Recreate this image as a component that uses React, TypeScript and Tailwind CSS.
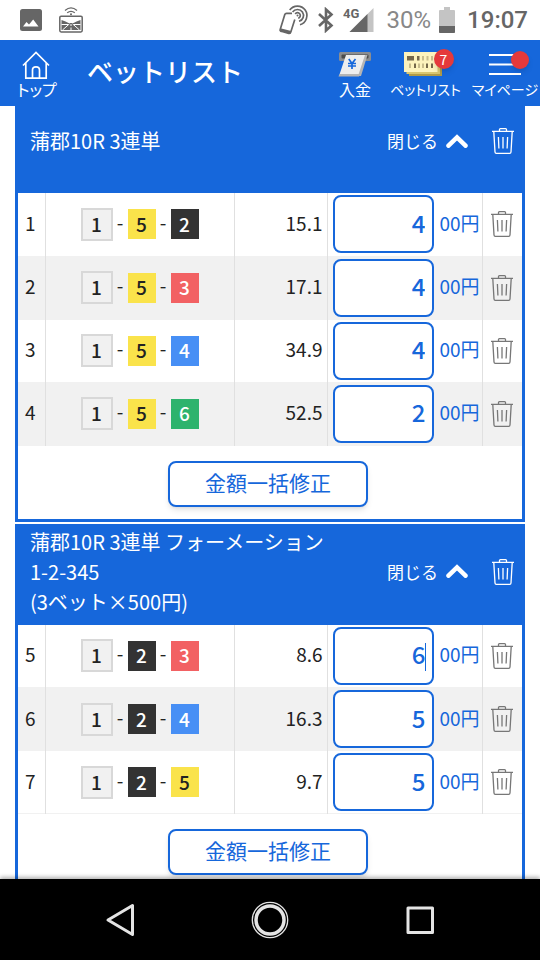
import { useState } from 'react';
import type { ReactNode } from 'react';

type Bet = {
  no: number;
  boats: number[];
  odds: string;
  amount: string;
  editing?: boolean;
};

type Group = {
  id: string;
  title: string[];
  headClass: string;
  bets: Bet[];
};

const groups: Group[] = [
  {
    id: 'normal',
    title: ['蒲郡10R 3連単'],
    headClass: 'pt-5 pb-[37px]',
    bets: [
      { no: 1, boats: [1, 5, 2], odds: '15.1', amount: '4' },
      { no: 2, boats: [1, 5, 3], odds: '17.1', amount: '4' },
      { no: 3, boats: [1, 5, 4], odds: '34.9', amount: '4' },
      { no: 4, boats: [1, 5, 6], odds: '52.5', amount: '2' },
    ],
  },
  {
    id: 'formation',
    title: ['蒲郡10R 3連単 フォーメーション', '1-2-345', '(3ベット×500円)'],
    headClass: 'pt-[3px] pb-2',
    bets: [
      { no: 5, boats: [1, 2, 3], odds: '8.6', amount: '6', editing: true },
      { no: 6, boats: [1, 2, 4], odds: '16.3', amount: '5' },
      { no: 7, boats: [1, 2, 5], odds: '9.7', amount: '5' },
    ],
  },
];

const boatStyles: Record<number, string> = {
  1: 'h-[33px] w-8 border-2 border-[#d8d8d8] bg-[#f1f1f1] text-[#222]',
  2: 'h-[30px] w-7 bg-[#333] text-white',
  3: 'h-[30px] w-7 bg-[#f26163] text-white',
  4: 'h-[30px] w-7 bg-[#478ff5] text-white',
  5: 'h-[30px] w-7 bg-[#fae34b] text-[#222]',
  6: 'h-[30px] w-7 bg-[#2db36d] text-white',
};

const TrashIcon = () => (
  <svg width="22" height="26" viewBox="0 0 22 26" fill="none" stroke="currentColor" strokeWidth="1.3">
    <path d="M0 3.3h22M7.5 3V1.6q0-.9.9-.9h5.2q.9 0 .9.9V3" />
    <path d="M1.8 3.6 3 24q.1 1.3 1.3 1.3h13.4q1.2 0 1.3-1.3l1.2-20.4" />
    <path d="M6.400 9l.5 11.500M11 9v11.500M15.600 9l-.5 11.500" />
  </svg>
);

const StatusBar = () => (
  <div className="flex h-10 shrink-0 items-center bg-white pr-3 pl-5 font-['Roboto',sans-serif] text-[#666]">
    <svg width="22" height="22" viewBox="0 0 22 22" aria-hidden="true">
      <rect width="22" height="22" rx="2.5" fill="#666" />
      <path d="M3 17.500 6.500 13l2.500 2.500L13.200 10.500l5.300 7z" fill="#fff" />
    </svg>
    <svg className="ml-[17px]" width="24" height="26" viewBox="0 0 24 26" fill="none" stroke="#666" aria-hidden="true">
      <path d="M6 3.400q6-5 12 0M8.200 5.800q3.800-3 7.600 0" strokeWidth="1.300" />
      <circle cx="12" cy="7.300" r="1" fill="#666" stroke="none" />
      <rect x=".8" y="9.300" width="22.400" height="15.600" rx="1.300" strokeWidth="1.500" />
      <path d="M2.500 13l4 1.500 3 1.500h5l3-1.500 4-1.500V23h-19z" fill="#666" stroke="none" />
      <path d="M10.500 16.800 3.500 23M13.500 16.800 20.500 23M2.500 17.500h6.500M21.500 17.500H15M12 17v2M12 20.500V23" stroke="#fff" strokeWidth="1" />
    </svg>
    <div className="ml-auto flex items-center">
      <svg width="30" height="30" viewBox="0 0 30 30" fill="none" stroke="#666" aria-hidden="true">
        <path d="M13 8.300H7.500q-1.300 0-1.700 1.200L1.200 24.500q-.4 1.500 1 1.800l7.600 2q1.500.3 2-1.200l4-12.500" strokeWidth="1.700" />
        <path d="M1.300 23.300l11 2.800-.8 2.600-10.700-2.700z" fill="#666" stroke="none" />
        <path d="M10.700 5A9.500 9.500 0 1 1 21 19.700M13.600 7A6 6 0 1 1 20 16.300M16.200 8.900A2.800 2.800 0 1 1 19.200 13.200" strokeWidth="1.700" />
        <circle cx="18.500" cy="10.500" r="1" fill="#666" stroke="none" />
      </svg>
      <svg className="ml-2" width="18" height="26" viewBox="0 0 18 26" fill="none" stroke="#666" strokeWidth="2.600" aria-hidden="true">
        <path d="M2 7l12.500 11.500-5.500 5V2.500l5.500 5L2 19" />
      </svg>
      <svg className="ml-2" width="32" height="26" viewBox="0 0 32 26" aria-hidden="true">
        <path d="M30.500 1v24H6.500z" fill="#c4c4c4" />
        <path d="M24.500 7v18h-18z" fill="#666" />
        <path d="M0 0h17v12H0z" fill="#fff" />
        <text x="0" y="11" fontSize="13" fontWeight="700" fill="#666">4G</text>
      </svg>
      <span className="ml-3 text-2xl text-[#888]">30%</span>
      <svg className="ml-2" width="16" height="26" viewBox="0 0 16 26" aria-hidden="true">
        <path d="M5 0h6v3h4q1 0 1 1v21q0 1-1 1H1q-1 0-1-1V4q0-1 1-1h4z" fill="#c4c4c4" />
        <path d="M0 19h16v6q0 1-1 1H1q-1 0-1-1z" fill="#666" />
      </svg>
      <span className="ml-3 text-2xl font-medium">19:07</span>
    </div>
  </div>
);

const HeaderLink = ({ label, className, children }: { label: string; className: string; children: ReactNode }) => (
  <a
    href="#"
    className={`flex flex-col items-center leading-[18px] whitespace-nowrap [font-feature-settings:'palt'] ${className}`}
  >
    <span className="relative flex h-8 items-center justify-center">{children}</span>
    {label}
  </a>
);

const Header = () => (
  <header className="flex h-[66px] shrink-0 bg-[#1667db] pt-2 text-white">
    <HeaderLink label="トップ" className="w-[74px] text-base">
      <svg className="mr-0.5" width="28" height="30" viewBox="0 0 28 30" fill="none" stroke="currentColor" strokeWidth="1.700" aria-hidden="true">
        <path d="M1 16.500 14 3.500l13 13M3.800 14v15.200h20.400V14" />
        <path d="M10.500 29V21q0-3.200 3.500-3.200t3.500 3.200v8" />
      </svg>
    </HeaderLink>
    <h1 className="ml-[13px] pt-[3px] text-[26px] leading-10 font-medium">ベットリスト</h1>
    <div className="ml-auto flex">
      <HeaderLink label="入金" className="w-[52px] text-base">
        <svg width="34" height="28" viewBox="0 0 34 28" aria-hidden="true">
          <rect x="1" y="2" width="32" height="9" rx="1.500" fill="#8b8d90" />
          <rect x="3.500" y="4.500" width="27" height="4" rx="1" fill="#4b4b4b" />
          <path d="M26 5h3.500l-6.500 21h-4z" fill="#b5b5b5" />
          <path d="M8 5h19l-6.500 19.500H1.500z" fill="#eee" />
          <path d="M1.500 24 .5 26.500H21l1-2.500z" fill="#b5b5b5" />
          <path d="M10.800 9l3.200 4.500L17.500 9M14 13.500V19M10 13.500h8M10 16h8" fill="none" stroke="#1667db" strokeWidth="1.700" />
        </svg>
      </HeaderLink>
      <HeaderLink label="ベットリスト" className="w-[89px] text-sm">
        <svg className="mr-1.5" width="38" height="26" viewBox="0 0 38 26" aria-hidden="true">
          <path d="M5 5h33v20H5z" fill="#b19b48" />
          <path d="M2.500 3H36v20H2.500z" fill="#d9c671" />
          <path d="M0 1h33.500v20H0z" fill="#fdf3bd" />
          <path d="M3 5h7v4.500H3zM13 5h2.500v4.500H13zM10 12.500h2V17h-2zM22 12.500h2V17h-2zM27 12.500h2V17h-2z" fill="#75684a" />
          <path d="M18 5h2v4.500h-2zM22.500 5h2v4.500h-2zM27 5h2v4.500h-2zM5 12.500h2V17H5zM14 12.500h2V17h-2zM18 12.500h2V17h-2z" fill="#c9bd8c" />
        </svg>
        <span className="absolute top-px -right-1.5 flex size-5 items-center justify-center rounded-full bg-[#e5393b] text-sm shadow-md">
          7
        </span>
      </HeaderLink>
      <HeaderLink label="マイページ" className="w-[70px] text-sm">
        <svg width="32" height="22" viewBox="0 0 32 22" stroke="currentColor" strokeWidth="2" aria-hidden="true">
          <path d="M0 2h32M0 11.500h32M0 21h32" />
        </svg>
        <span className="absolute top-[3px] -right-2 size-[18px] rounded-full bg-[#e5393b] shadow-md"></span>
      </HeaderLink>
    </div>
  </header>
);

const BetRow = ({ bet }: { bet: Bet }) => {
  const [amount, setAmount] = useState(bet.amount);

  return (
    <tr className="h-[63px] border-b border-[#f1f1f1] odd:bg-white even:bg-[#f1f1f1] [&>td]:border-l [&>td]:border-[#e0e0e0]">
      <th scope="row" className="pt-0 pr-0.5 pb-0.5 pl-0 text-center font-normal">{bet.no}</th>
      <td className="p-0">
        <div className="flex items-center justify-center">
          {bet.boats.map((boat, i) => (
            <div key={boat} className="flex items-center">
              {i > 0 && <span className="w-[15px] pb-1 text-center">-</span>}
              <span className={`flex items-center justify-center pb-0.5 leading-none font-medium ${boatStyles[boat]}`}>
                {boat}
              </span>
            </div>
          ))}
        </div>
      </td>
      <td className="pt-0 pr-1 pb-0.5 pl-0 text-right">{bet.odds}</td>
      <td className="py-0 pr-0.5 pl-[5px]">
        <label className="flex items-center gap-[5px] text-[#1667db]">
          <span className="relative min-w-0 flex-1">
            <input
              type="text"
              inputMode="numeric"
              aria-label={`${bet.no} 金額`}
              value={amount}
              onChange={(e) => setAmount(e.target.value)}
              className="block h-[58px] w-full rounded-lg border-2 border-[#1667db] bg-white pr-[7px] pb-1 text-right text-2xl font-medium outline-none"
            />
            {bet.editing && <span className="absolute top-4 right-2 h-7 w-px bg-[#1667db]"></span>}
          </span>
          <span className="pb-0.5">00円</span>
        </label>
      </td>
      <td className="p-0">
        <button type="button" aria-label="削除" className="mx-auto block text-[#777]">
          <TrashIcon />
        </button>
      </td>
    </tr>
  );
};

const BetGroup = ({ group }: { group: Group }) => {
  const [open, setOpen] = useState(true);

  return (
    <section className="shrink-0 border-[3px] border-t-0 border-[#1667db] bg-white">
      <div className={`flex items-center bg-[#1667db] pr-2 pl-3 text-white ${group.headClass}`}>
        <h2 className="flex-1 leading-[30px]">
          {group.title.map((line) => (
            <span key={line} className="block">{line}</span>
          ))}
        </h2>
        <button type="button" onClick={() => setOpen(!open)} className="flex items-center gap-2 text-[17px]">
          閉じる
          <svg
            width="22"
            height="14"
            viewBox="0 0 22 14"
            fill="none"
            stroke="currentColor"
            strokeWidth="4.500"
            strokeLinecap="round"
            aria-hidden="true"
          >
            <path d="M2.500 11.700 11 3.500l8.500 8.200" />
          </svg>
        </button>
        <button type="button" aria-label="すべて削除" className="ml-6">
          <TrashIcon />
        </button>
      </div>
      {open && (
        <>
          <table className="w-full table-fixed border-collapse text-[19px] text-[#222]">
            <colgroup>
              <col className="w-[27px]" />
              <col />
              <col className="w-[93px]" />
              <col className="w-[155px]" />
              <col className="w-10" />
            </colgroup>
            <tbody>
              {group.bets.map((bet) => (
                <BetRow key={bet.no} bet={bet} />
              ))}
            </tbody>
          </table>
          <div className="flex justify-center pt-[15px] pr-1 pb-3">
            <button
              type="button"
              className="h-[46px] w-2/5 rounded-lg border-2 border-[#1667db] bg-white pb-0.5 text-[21px] text-[#1667db] shadow-md"
            >
              金額一括修正
            </button>
          </div>
        </>
      )}
    </section>
  );
};

const NavBar = () => (
  <nav className="relative flex h-[81px] shrink-0 items-center justify-center gap-[112px] bg-black text-[#e4e4e4] shadow-[0_-2px_4px_rgba(0,0,0,0.3)]">
    <button type="button" aria-label="戻る">
      <svg width="38" height="38" viewBox="0 0 38 38" fill="none" stroke="currentColor" strokeWidth="3" strokeLinejoin="round">
        <path d="M31.500 4.500v29L7 19z" />
      </svg>
    </button>
    <button type="button" aria-label="ホーム">
      <svg width="38" height="38" viewBox="0 0 38 38" fill="none" stroke="currentColor">
        <circle cx="19" cy="19" r="17.700" strokeWidth="1.300" />
        <circle cx="19" cy="19" r="14" strokeWidth="3.500" />
      </svg>
    </button>
    <button type="button" aria-label="履歴">
      <svg width="38" height="38" viewBox="0 0 38 38" fill="none" stroke="currentColor" strokeWidth="3" strokeLinejoin="round">
        <rect x="7" y="7" width="24.500" height="24.500" />
      </svg>
    </button>
  </nav>
);

const App = () => {
  return (
    <div className="flex h-screen flex-col bg-white font-['Noto_Sans_CJK_JP',sans-serif] text-xl">
      <StatusBar />
      <Header />
      <main className="flex min-h-0 flex-1 flex-col gap-0.5 overflow-y-auto px-[15px] [scrollbar-width:none]">
        {groups.map((group) => (
          <BetGroup key={group.id} group={group} />
        ))}
      </main>
      <NavBar />
    </div>
  );
};

export default App;
